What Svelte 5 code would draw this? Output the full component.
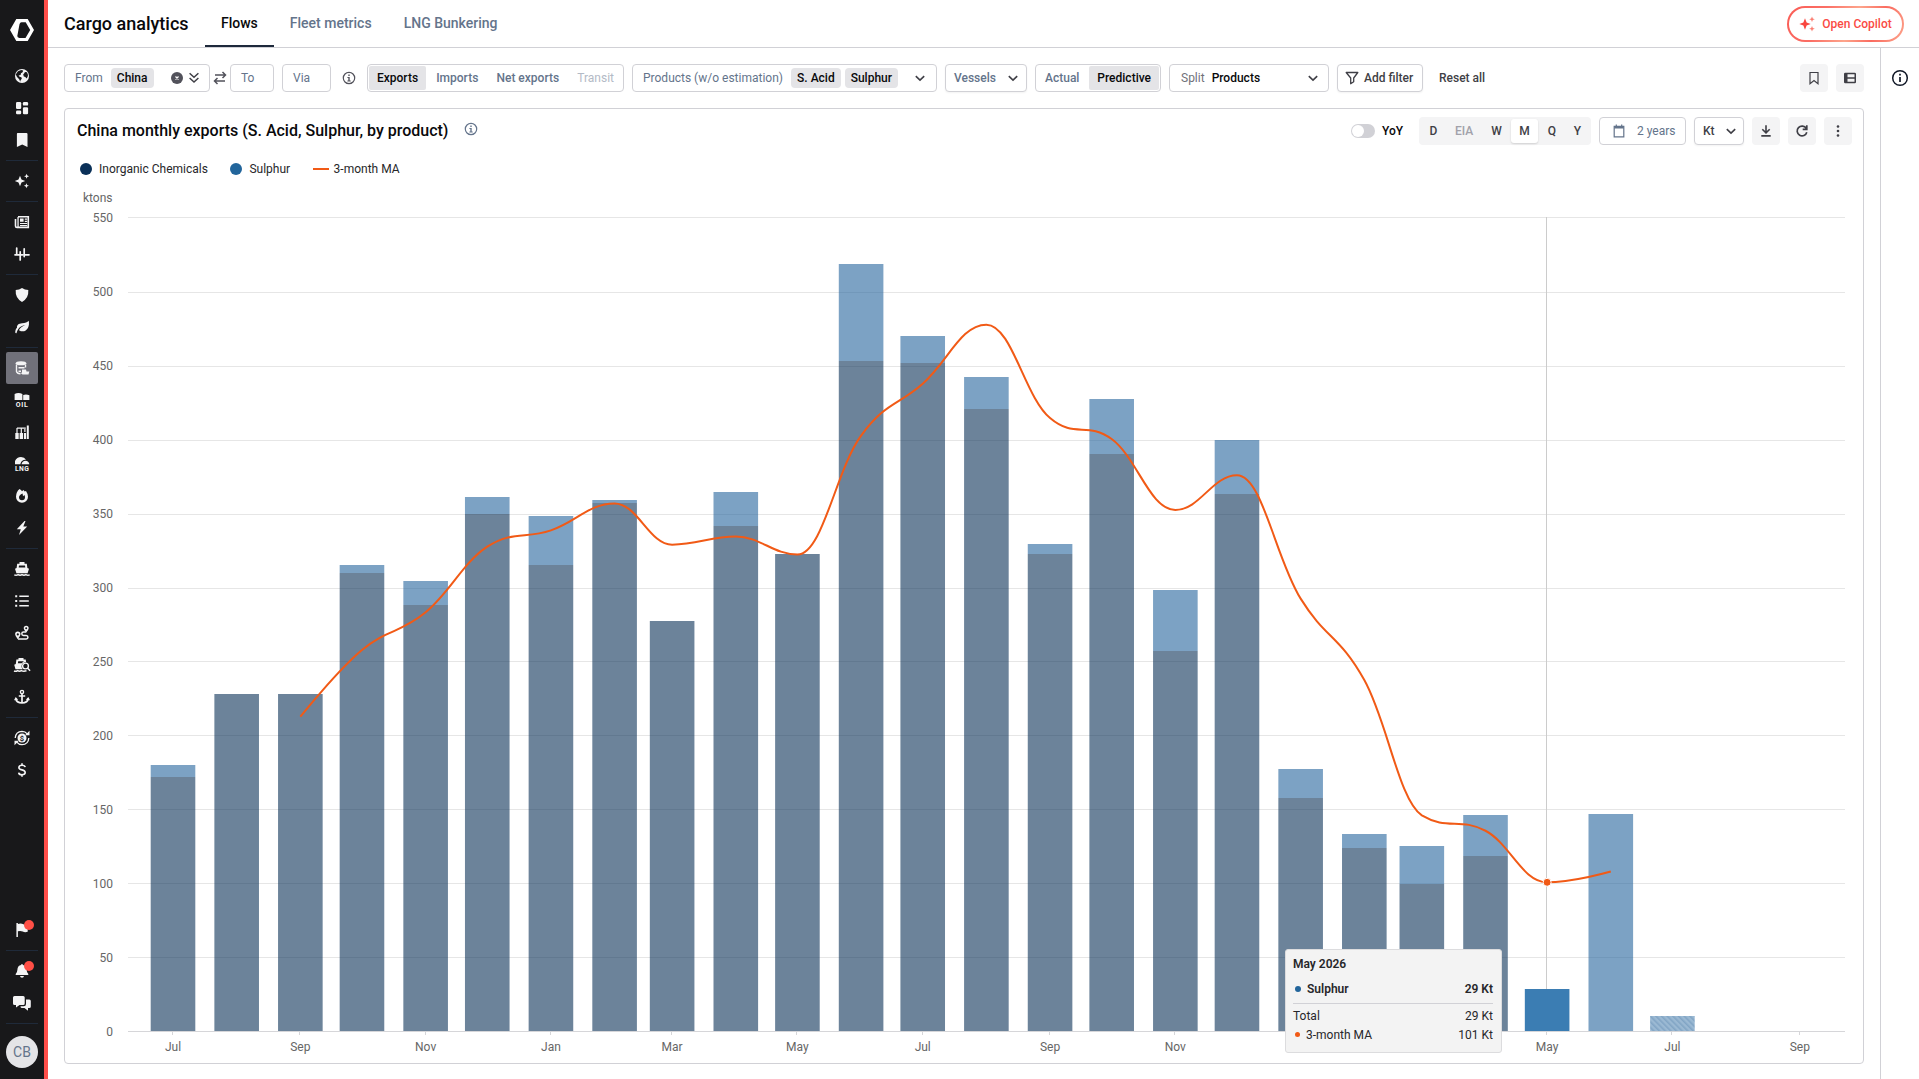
<script lang="ts">
	type Month = { year: number; month: number; inorganic: number; sulphur: number };

	// Monthly volumes in kt, starting July 2024
	const volumes: [number, number][] = [
		[172, 8], [228, 0], [228, 0], [310, 5.2], [288.2, 16.2], [349.7, 11.4],
		[315.2, 33.1], [357, 2], [277.5, 0], [341.6, 23.2], [322.6, 0], [453, 65.6],
		[451.7, 18.2], [420.6, 21.6], [322.6, 6.8], [390.2, 37.2], [257, 41.3], [363.2, 36.5],
		[157.6, 19.8], [124, 9.2], [99.7, 25.6], [118.3, 28.1], [0, 28.7], [0, 147.2], [0, 10.5]
	];

	const months: Month[] = volumes.map(([inorganic, sulphur], i) => ({
		year: 2024 + Math.floor((6 + i) / 12),
		month: (6 + i) % 12,
		inorganic,
		sulphur
	}));

	const monthNames = ['Jan', 'Feb', 'Mar', 'Apr', 'May', 'Jun', 'Jul', 'Aug', 'Sep', 'Oct', 'Nov', 'Dec'];
	const yTicks = [0, 50, 100, 150, 200, 250, 300, 350, 400, 450, 500, 550];
	const xTicks = Array.from({ length: 14 }, (_, i) => i * 2);
	const start = Date.UTC(2024, 6, 1);
	const barWidth = 44.6;
	const forecastIndex = 24;
	const hovered = 22;

	// Time scale, the month offset is counted from July 2024
	function xOf(i: number): number {
		const days = (Date.UTC(2024, 6 + i, 1) - start) / 86400000;
		return 108 + days * 2.054;
	}

	function yOf(v: number): number {
		return 841.5 - v * 1.48;
	}

	function snap(v: number): number {
		return Math.round(yOf(v));
	}

	// Grid lines sit on whole pixels, the top one on the edge of the plot
	function gridY(v: number): number {
		return v === 550 ? 27.5 : Math.floor(841.55 - v * 1.4783) + 0.5;
	}

	const average = months.slice(0, 24).map((_, i) => {
		if (i < 2) return null;
		const sum = months.slice(i - 2, i + 1).reduce((s, m) => s + m.inorganic + m.sulphur, 0);
		return { x: xOf(i), y: yOf(sum / 3) - 1 };
	}).filter((p) => p !== null);

	// Spline that never overshoots its neighbours
	function spline(pts: { x: number; y: number }[]): string {
		let d = `M${pts[0].x} ${pts[0].y}`;
		let out = pts[0];
		for (let i = 1; i < pts.length; i++) {
			const p = pts[i];
			const prev = pts[i - 1];
			const next = pts[i + 1];
			let left = { ...p };
			let right = { ...p };
			if (next) {
				const slope = (next.y - prev.y) / (next.x - prev.x);
				left = { x: p.x - 0.4 * (p.x - prev.x), y: p.y - slope * 0.4 * (p.x - prev.x) };
				right = { x: p.x + 0.4 * (next.x - p.x), y: p.y + slope * 0.4 * (next.x - p.x) };
				const clampLeft = Math.min(Math.max(left.y, Math.min(prev.y, p.y)), Math.max(prev.y, p.y));
				if (clampLeft !== left.y) {
					left.y = clampLeft;
					right.y = 2 * p.y - left.y;
				}
				const clampRight = Math.min(Math.max(right.y, Math.min(next.y, p.y)), Math.max(next.y, p.y));
				if (clampRight !== right.y) {
					right.y = clampRight;
					left.y = 2 * p.y - right.y;
				}
			}
			d += `C${out.x} ${out.y} ${left.x} ${left.y} ${p.x} ${p.y}`;
			out = right;
		}
		return d;
	}

	const navGroups = [
		['globe', 'dashboard', 'bookmark'],
		['sparkles'],
		['news', 'signal'],
		['shield', 'leaf'],
		['cargo', 'oil', 'refinery', 'lng', 'flame', 'bolt'],
		['ship', 'list', 'route', 'shipSearch', 'anchor'],
		['freight', 'dollar']
	];

	const tabs = ['Flows', 'Fleet metrics', 'LNG Bunkering'];
	const periods = ['D', 'EIA', 'W', 'M', 'Q', 'Y'];

	let tab = $state('Flows');
	let direction = $state('Exports');
	let mode = $state('Predictive');
	let period = $state('M');
	let activeNav = $state('cargo');
</script>

{#snippet icon(name: string)}
	<svg class="icon" width="16" height="16" viewBox="0 0 16 16" fill="currentColor" stroke="none">
		{#if name === 'globe'}
			<circle cx="8" cy="8" r="7" />
			<path d="M4 3.2 7.2 2l2 .6-.6 1.6L7 5.2 6.6 7 4.6 7.4l1 1.4 1.8.4 .4 1.6-1.2 1.4-.4 1.6-1-2.6L3 9 1.8 6.6 3 4.6zM11 4l2 .2 1 2.8-.4 2-1.2 1.4-1-1.4-1.6-.4-.6-2 1-1.4z" fill="#18181a" />
		{:else if name === 'dashboard'}
			<rect x="2" y="2" width="5.2" height="7" rx="1.2" />
			<rect x="8.9" y="2" width="5.2" height="3.6" rx="1.2" />
			<rect x="2" y="10.6" width="5.2" height="3.6" rx="1.2" />
			<rect x="8.9" y="7.2" width="5.2" height="7" rx="1.2" />
		{:else if name === 'bookmark'}
			<path d="M3.6 1h8.8q1.1 0 1.1 1.1V15L8.2 12.4 2.9 15V2.1Q2.9 1 3.6 1z" />
		{:else if name === 'sparkles'}
			<path d="M6 2.8 7.5 6.5 11.2 8 7.5 9.5 6 13.2 4.5 9.5.8 8l3.7-1.5zM12.6.8l.7 1.8 1.8.7-1.8.7-.7 1.8-.7-1.8-1.8-.7 1.8-.7zM12.4 10.2l.7 1.8 1.8.7-1.8.7-.7 1.8-.7-1.8-1.8-.7 1.8-.7z" />
		{:else if name === 'news'}
			<path fill="none" stroke="currentColor" stroke-width="1.6" d="M4 2.8h10.3v10.6H3q-1.5 0-1.5-1.4V5" />
			<path d="M3.4 3h1.3v10H3.4zM6 4.5h3.6v3.2H6zM10.8 4.6h2.4v1.2h-2.4zM10.8 6.8h2.4V8h-2.4zM6 9h7.2v1.1H6zM6 11h7.2v1.1H6z" />
		{:else if name === 'signal'}
			<path fill="none" stroke="currentColor" stroke-width="1.7" stroke-linecap="round" stroke-linejoin="round" d="M1 8.8h5.2v5.2M2.7 2v6.5M6.2 8.8V5.8M10.2 2.8v7.8M6.2 8.8h2.4M10.2 8.8h4.8" />
		{:else if name === 'shield'}
			<path d="M8 1q2.8 1.9 6.3 2.1.6 8.2-6.3 11.9Q1.1 11.3 1.7 3.1 5.2 2.9 8 1z" />
		{:else if name === 'leaf'}
			<path transform="scale(.667)" d="M17 9C8 11 5.4 15.2 3.8 21.3L2 21C1.5 17 3 14 4.5 13C4 9 7 6.5 12 6.2C17 6 20 5 22 2.5C24 10 20 19 12 18.5C9.5 18.3 8 17.5 7.5 16.5C10 12 14 10 17 9Z" />
		{:else if name === 'cargo'}
			<ellipse cx="7" cy="3.3" rx="5.3" ry="2" />
			<path fill="none" stroke="currentColor" stroke-width="1.4" d="M2.5 4.5v7q.5 2 4 2.2M11.5 4.5v3M4.500 7.700h6M4.500 11.200h2.500" />
			<path d="M8 9.500h4l.5 2h2.800l-.8 3H8.500l-2-1.800H8z" />
		{:else if name === 'oil'}
			<path d="M.6 2Q4.500 0 8.400 2v6H.6zM9.200 3q3-1 6.200.3V8H9.200z" />
			<text x="8.2" y="15.4" font-size="7" font-weight="700" text-anchor="middle" letter-spacing=".7">OIL</text>
		{:else if name === 'refinery'}
			<path d="M1.300 9h3.400v6H1.300zM5.600 9H9v6H5.600zM9.900 9h2.200v6H9.900zM12.800 1.500h2V15h-2zM3 3.500h8.800v1.300H3zM2.400 4h1.200v5H2.400zM6.700 4h1.200v5H6.700zM10.300 5h1.200v3h-1.200z" />
		{:else if name === 'lng'}
			<path d="M1 8.300V5q1.800-4 6-4 3.500.2 5 2.800Q8 3.300 6.500 7.500v.8zM7.500 8.300q.8-3.600 4-3.600T15.400 8.300z" />
			<text x="8.2" y="15.4" font-size="6.8" font-weight="700" text-anchor="middle" letter-spacing=".5">LNG</text>
		{:else if name === 'flame'}
			<path fill-rule="evenodd" d="M5.500 1q1.700.8 2.500 2.300L9.500 2l1.200 1.500L12 3q2 3 2 5.700A6 6 0 0 1 8 14.800 6 6 0 0 1 2 8.700Q2 4 5.500 1zM8.600 5.400Q5 6.800 5 9.200a3 3 0 0 0 6 0Q11 8 10.400 7L9 8.200z" />
		{:else if name === 'bolt'}
			<path d="M10.500 1 2.800 9.200h4L5 15l8.200-8.500H9.300L11.500 1z" />
		{:else if name === 'ship'}
			<path fill-rule="evenodd" d="M5.500 1h5v1.700h2.300L13.400 7l1.600.8-1.400 4.400H2.400L1 7.800 2.600 7l.6-4.300h2.300zM5 4.500 4.700 6.500h6.600L11 4.500z" />
			<path fill="none" stroke="currentColor" stroke-width="1.5" d="M.3 13.900q2 .9 3.800-.3 2 1.200 3.900 0 2 1.200 3.900 0 1.800 1.200 3.800.3" />
		{:else if name === 'list'}
			<path d="M1.200 2.200h2v2h-2zM1.200 7h2v2h-2zM1.200 11.800h2v2h-2zM5.300 2.400h9.500V4H5.300zM5.300 7.200h9.500v1.600H5.300zM5.300 12h9.500v1.600H5.300z" />
		{:else if name === 'route'}
			<path fill-rule="evenodd" d="M3.800 6.600a2.700 2.700 0 0 1 2.700 2.700q0 1.700-2.700 5-2.700-3.300-2.700-5a2.700 2.700 0 0 1 2.700-2.700zm0 1.700a1.100 1.100 0 1 0 0 2.200 1.100 1.100 0 0 0 0-2.200zM12.200.8a2.500 2.500 0 0 1 2.500 2.500q0 1.500-2.500 4.200-2.500-2.700-2.500-4.200A2.500 2.500 0 0 1 12.200.8zm0 1.500a1 1 0 1 0 0 2 1 1 0 0 0 0-2z" />
			<path fill="none" stroke="currentColor" stroke-width="1.5" d="M4 13.900h8.200a1.700 1.700 0 0 0 0-3.500H9.500a1.700 1.700 0 0 1 0-3.400h2.700" />
		{:else if name === 'shipSearch'}
			<path fill-rule="evenodd" d="M4.500 1h5v1.600h2.200l.4 2.500Q7.500 6 7.500 9.500q.2 1.800 1.200 2.700H1.500L.2 7.800 1.800 7l.6-4.400h2.100zM4.200 4.300l-.3 2h3.800l2.200-2z" />
			<circle cx="11.5" cy="9" r="2.9" fill="none" stroke="currentColor" stroke-width="1.4" />
			<path fill="none" stroke="currentColor" stroke-width="1.5" d="m13.400 11 2.700 2.700M0 14q2 .8 3.500-.4 2 1.200 4 0 2 1.200 5 .2" />
		{:else if name === 'anchor'}
			<path fill="none" stroke="currentColor" stroke-width="1.7" d="M8 5v8.800M4.800 7h6.400M1.800 9.700q.4 4.200 6.200 4.300 5.800-.1 6.200-4.300" />
			<circle cx="8" cy="3" r="1.6" fill="none" stroke="currentColor" stroke-width="1.4" />
			<path d="M0 11.300 1.700 8l2.500 2.800zM16 11.300 14.300 8l-2.500 2.800z" />
		{:else if name === 'freight'}
			<circle cx="8" cy="8" r="4.5" />
			<path fill="none" stroke="currentColor" stroke-width="1.3" d="M1.200 8Q1.700 1.500 8 1.300q3.300 0 5.200 2.500M14.800 8Q14.300 14.500 8 14.700q-3.300 0-5.200-2.500" />
			<path d="M15.500.8v4.400h-4.400zM.5 15.200v-4.400h4.400z" />
			<text x="8" y="10.7" font-size="7.5" font-weight="700" text-anchor="middle" fill="#18181a">$</text>
		{:else if name === 'dollar'}
			<path fill="none" stroke="currentColor" stroke-width="1.6" d="M11.200 5.200Q10.800 3.300 8 3.300T4.900 5.400Q4.900 7.300 8 7.900t3.200 2.600Q11.200 12.700 8 12.700T4.700 10.600M8 1.200v2.400M8 12.400v2.400" />
		{:else if name === 'flag'}
			<path d="M2.400 1h1.500v1q3-1 5.500.3 2 .9 4.300.2v7.300q-2.700 1-5-.2-2-1-4.800-.3V15H2.400z" />
		{:else if name === 'bell'}
			<path d="M8 1q.8 0 .9 1 3.600.8 3.700 4.700.1 2.800 1.700 4.300v1H1.700v-1q1.600-1.500 1.700-4.300Q3.500 2.800 7.100 2 7.200 1 8 1zM6 13h4q-.3 1.800-2 1.800T6 13z" />
		{:else if name === 'funnel'}
			<path fill="none" stroke="currentColor" stroke-width="1.3" stroke-linejoin="round" d="M2.200 2.500h11.600L9.700 8v3.800l-3 1.900V8z" />
		{:else if name === 'chevron'}
			<path fill="none" stroke="currentColor" stroke-width="1.6" d="m3.800 6.200 4.200 4 4.200-4" />
		{:else if name === 'doubleChevron'}
			<path fill="none" stroke="currentColor" stroke-width="1.5" d="m3.600 3.200 4.400 4 4.400-4M3.600 8l4.400 4 4.400-4" />
		{:else if name === 'clear'}
			<circle cx="8" cy="8" r="6" />
			<path stroke="#fff" stroke-width="1.2" d="m6.500 6.500 3 3M9.500 6.500l-3 3" />
		{:else if name === 'swap'}
			<path fill="none" stroke="currentColor" stroke-width="1.5" d="M3 5h10.300M10.500 2l3 3-3 3M13 11H2.700M5.500 8l-3 3 3 3" />
		{:else if name === 'info'}
			<circle cx="8" cy="8" r="5.7" fill="none" stroke="currentColor" stroke-width="1.2" />
			<path d="M7.300 4.600h1.400V6H7.300zM6.400 7h2.300v3.400h1v1H6.400v-1h.9V8h-.9z" />
		{:else if name === 'bookmarkOutline'}
			<path fill="none" stroke="currentColor" stroke-width="1.2" d="M4 2.500h8v11.200l-4-3.200-4 3.200z" />
		{:else if name === 'layout'}
			<path fill-rule="evenodd" d="M3.300 2.800h9.400q1.300 0 1.300 1.300v7.800q0 1.300-1.300 1.300H3.300Q2 13.200 2 11.900V4.100q0-1.300 1.300-1.300zM5.500 4.300v3h7v-3zM5.500 8.700v3h7v-3z" />
		{:else if name === 'calendar'}
			<path fill="none" stroke="currentColor" stroke-width="1.2" d="M3.200 3.300h9.600v10.500H3.200zM5.300 1.500v2M10.700 1.500v2" />
			<path d="M3.200 3.300h9.600v2.200H3.200z" />
		{:else if name === 'download'}
			<path fill="none" stroke="currentColor" stroke-width="1.6" d="M8 2.200v7.500M4.300 6.200 8 9.900l3.700-3.700M3.300 12.900h9.400" />
		{:else if name === 'refresh'}
			<path fill="none" stroke="currentColor" stroke-width="1.7" d="M12.200 5.300a4.900 4.900 0 1 0 .6 3.900M12.800 2.200v4.200H8.700" />
		{:else if name === 'more'}
			<circle cx="8" cy="3.5" r="1.3" /><circle cx="8" cy="8" r="1.3" /><circle cx="8" cy="12.5" r="1.3" />
		{/if}
	</svg>
{/snippet}

<div class="app">
	<nav class="sidebar">
		<svg class="logo" width="24" height="22" viewBox="0 0 24 22">
			<path fill="#fff" fill-rule="evenodd" d="M6.300 0h11.400L24 11l-6.300 11H6.300L0 11zM11.500 3.200q-1.500.2-2 2L7.300 17q0 1.800 2 1.900h6.200L20.200 11l-4.500-7.800z" />
		</svg>
		{#each navGroups as group, g}
			{#if g > 0}<hr />{/if}
			{#each group as name}
				<button class="nav-item" class:active={activeNav === name} onclick={() => (activeNav = name)} aria-label={name}>
					{@render icon(name)}
				</button>
			{/each}
		{/each}
		<div class="spacer"></div>
		<button class="nav-item" aria-label="flag">{@render icon('flag')}<i class="dot"></i></button>
		<hr />
		<button class="nav-item" aria-label="bell">{@render icon('bell')}<i class="dot"></i></button>
		<button class="nav-item" aria-label="chat">
			<svg width="18" height="15" viewBox="0 0 18 15" fill="currentColor">
				<path d="M1.500 0h8.700q1.500 0 1.500 1.500v6q0 1.500-1.500 1.500H6.500L3 11.500V9H1.500Q0 9 0 7.500v-6Q0 0 1.500 0z" />
				<path d="M13 3.500h3.300q1.500 0 1.500 1.500v5.500q0 1.500-1.500 1.500H15v2.700L11.500 12H9q-1.500 0-1.500-1.500v-.3h3.300Q13 10.200 13 8z" />
			</svg>
		</button>
		<hr />
		<div class="avatar">CB</div>
	</nav>

	<div class="main">
		<header>
			<h1>Cargo analytics</h1>
			<div class="tabs">
				{#each tabs as t}
					<button class="tab" class:active={tab === t} onclick={() => (tab = t)}>{t}</button>
				{/each}
			</div>
			<button class="copilot">
				<svg width="16" height="16" viewBox="0 0 16 16">
					<path fill="#f9463f" d="M6 2.300 7.600 6.400 11.700 8 7.600 9.600 6 13.700 4.400 9.600.3 8l4.100-1.600z" />
					<path fill="#fb7c70" d="m13 .4.800 2 2 .8-2 .8-.8 2-.8-2-2-.8 2-.8zM13 9.900l.8 2 2 .8-2 .8-.8 2-.8-2-2-.8 2-.8z" />
				</svg>
				Open Copilot
			</button>
		</header>

		<div class="body">
			<div class="content">
				<div class="filters">
					<div class="box from">
						<span class="muted">From</span>
						<span class="chip">China</span>
						<span class="clear">{@render icon('clear')}</span>
						{@render icon('doubleChevron')}
					</div>
					<span class="swap">{@render icon('swap')}</span>
					<div class="box to">To</div>
					<div class="box via">Via</div>
					<span class="hint">{@render icon('info')}</span>
					<div class="box group directions">
						{#each ['Exports', 'Imports', 'Net exports', 'Transit'] as d}
							<button class:active={direction === d} disabled={d === 'Transit'} onclick={() => (direction = d)}>{d}</button>
						{/each}
					</div>
					<div class="box products">
						<span class="muted">Products (w/o estimation)</span>
						<span class="chip">S. Acid</span>
						<span class="chip">Sulphur</span>
						{@render icon('chevron')}
					</div>
					<div class="box vessels">
						<span class="muted">Vessels</span>
						{@render icon('chevron')}
					</div>
					<div class="box group modes">
						{#each ['Actual', 'Predictive'] as m}
							<button class:active={mode === m} onclick={() => (mode = m)}>{m}</button>
						{/each}
					</div>
					<div class="box split">
						<span class="light">Split</span>
						<span class="value">Products</span>
						{@render icon('chevron')}
					</div>
					<button class="box add">{@render icon('funnel')}Add filter</button>
					<button class="reset">Reset all</button>
					<button class="square first" aria-label="Save view">{@render icon('bookmarkOutline')}</button>
					<button class="square" aria-label="Layout">{@render icon('layout')}</button>
				</div>

				<section class="card">
					<div class="card-head">
						<h2>China monthly exports (S. Acid, Sulphur, by product)</h2>
						<span class="title-info">{@render icon('info')}</span>
						<div class="tools">
							<span class="toggle"></span>
							<span class="yoy">YoY</span>
							<div class="periods">
								{#each periods as p}
									<button class={p} class:active={period === p} disabled={p === 'EIA'} onclick={() => (period = p)}>{p}</button>
								{/each}
							</div>
							<div class="box range">{@render icon('calendar')}2 years</div>
							<div class="box unit">Kt{@render icon('chevron')}</div>
							<button class="square" aria-label="Download">{@render icon('download')}</button>
							<button class="square" aria-label="Refresh">{@render icon('refresh')}</button>
							<button class="square" aria-label="More">{@render icon('more')}</button>
						</div>
					</div>

					<div class="legend">
						<span><i class="swatch inorganic"></i>Inorganic Chemicals</span>
						<span><i class="swatch sulphur"></i>Sulphur</span>
						<span><i class="swatch line"></i>3-month MA</span>
					</div>

					<div class="chart">
						<svg width="1797" height="873" viewBox="0 0 1797 873">
							<defs>
								<pattern id="hatch" width="4" height="4" patternUnits="userSpaceOnUse" patternTransform="rotate(-45)">
									<rect width="4" height="4" fill="#9bb9d3" />
									<rect width="1.6" height="4" fill="#82a5c5" />
								</pattern>
							</defs>
							<text class="axis" x="47.5" y="12" text-anchor="end">ktons</text>
							{#each yTicks as t}
								<path class="grid" class:base={t === 0} d="M63 {gridY(t)}H1780" />
								<text class="axis" x="48" y={yOf(t) + 4.9} text-anchor="end">{t}</text>
							{/each}
							<path class="crosshair" d="M{Math.floor(xOf(hovered)) - 0.5} 27V841" />
							{#each months as m, i}
								{@const x = xOf(i) - barWidth / 2}
								{@const top = snap(m.inorganic + m.sulphur)}
								{@const split = snap(m.inorganic)}
								{#if m.sulphur > 0}
									<rect
										class="bar-sulphur"
										class:hovered={i === hovered}
										class:forecast={i === forecastIndex}
										x={x}
										y={top}
										width={barWidth}
										height={Math.min(split, 841) - top}
									/>
								{/if}
								{#if m.inorganic > 0}
									<rect class="bar-inorganic" x={x} y={split} width={barWidth} height={841 - split} />
								{/if}
							{/each}
							{#each xTicks as i}
								<path class="tick" d="M{Math.round(xOf(i)) - 0.5} 842v3" />
								<text class="axis" x={xOf(i)} y="861" text-anchor="middle">{monthNames[(6 + i) % 12]}</text>
							{/each}
							<path class="average" d={spline(average)} />
							<circle cx={xOf(hovered)} cy={average[hovered - 2].y} r="4" fill="#f15a16" stroke="#fff" />
						</svg>

						<div class="tooltip">
							<strong>May 2026</strong>
							<div class="row bold"><i class="blue"></i>Sulphur<span>29 Kt</span></div>
							<div class="row">Total<span>29 Kt</span></div>
							<div class="row"><i class="orange"></i>3-month MA<span>101 Kt</span></div>
						</div>
					</div>
				</section>
			</div>
			<aside>
				<svg width="18" height="18" viewBox="0 0 18 18" fill="none" stroke="#111827">
					<circle cx="9" cy="9" r="7.3" stroke-width="1.5" />
					<path stroke-width="1.7" d="M9 8v5M9 4.700v1.700" />
				</svg>
			</aside>
		</div>
	</div>
</div>

<style>
	:global(body) {
		margin: 0;
		background: #fff;
		font-family: Roboto, 'Liberation Sans', sans-serif;
		font-size: 12px;
		color: #09090b;
	}

	button {
		font: inherit;
		color: inherit;
		background: none;
		border: none;
		padding: 0;
		cursor: pointer;
	}

	.icon {
		flex-shrink: 0;
		display: block;
		overflow: visible;
	}

	.app {
		display: flex;
		height: 1079px;
		overflow: hidden;
	}

	.sidebar {
		width: 44px;
		flex-shrink: 0;
		box-sizing: content-box;
		background: #18181a;
		border-right: 4px solid #ff4f4a;
		color: #f4f4f5;
		display: flex;
		flex-direction: column;
		align-items: center;
	}

	.logo {
		margin: 19px 0;
		flex-shrink: 0;
	}

	.sidebar hr {
		width: 32px;
		height: 1px;
		margin: 4px 0;
		border: none;
		background: #1f2a3a;
		flex-shrink: 0;
	}

	.nav-item {
		position: relative;
		width: 32px;
		height: 32px;
		flex-shrink: 0;
		display: flex;
		align-items: center;
		justify-content: center;
		border-radius: 2px;
	}

	.nav-item.active {
		background: #71717a;
	}

	.spacer {
		flex: 1;
	}

	.dot {
		position: absolute;
		top: 6px;
		right: 4px;
		width: 10px;
		height: 10px;
		border-radius: 50%;
		background: #ff4f46;
	}

	.avatar {
		width: 32px;
		height: 32px;
		margin: 8px 0 11px;
		border-radius: 50%;
		background: #e4e4e7;
		color: #64748b;
		font-size: 14px;
		line-height: 32px;
		text-align: center;
		flex-shrink: 0;
	}

	.main {
		flex: 1;
		min-width: 0;
		display: flex;
		flex-direction: column;
	}

	header {
		height: 47px;
		display: flex;
		align-items: stretch;
		padding: 0 15px 0 16px;
		border-bottom: 1px solid #d1d1d6;
	}

	h1 {
		margin: 0;
		width: 141px;
		font-size: 18px;
		font-weight: 500;
		line-height: 48px;
		white-space: nowrap;
	}

	.tabs {
		display: flex;
	}

	.tab {
		padding: 1px 16px 0;
		font-size: 14px;
		font-weight: 500;
		color: #64748b;
		border-bottom: 2px solid transparent;
	}

	.tab.active {
		color: #09090b;
		border-color: #1e293b;
	}

	.copilot {
		width: 117px;
		height: 36px;
		margin: 6px 0 0 auto;
		box-sizing: border-box;
		border: 2px solid transparent;
		border-radius: 18px;
		background:
			linear-gradient(#fff, #fff) padding-box,
			linear-gradient(115deg, #fa5b54, #fb6f66 30%, #fda58c 55%, #fa6b60 75%, #fda58c) border-box;
		color: #fa4b45;
		font-weight: 500;
		display: flex;
		align-items: center;
		justify-content: center;
		gap: 7px;
		white-space: nowrap;
	}

	.body {
		flex: 1;
		display: flex;
		min-height: 0;
	}

	.content {
		flex: 1;
		min-width: 0;
		padding: 16px 16px 15px;
		display: flex;
		flex-direction: column;
		gap: 16px;
	}

	aside {
		width: 39px;
		border-left: 1px solid #d1d1d6;
		display: flex;
		justify-content: center;
		padding-top: 21px;
		box-sizing: border-box;
	}

	.filters {
		display: flex;
		height: 28px;
		align-items: center;
		font-weight: 500;
		white-space: nowrap;
	}

	.box {
		box-sizing: border-box;
		height: 28px;
		display: flex;
		align-items: center;
		border: 1px solid #d1d1d6;
		border-radius: 4px;
		background: #fff;
		color: #3f3f46;
	}

	.muted,
	.to,
	.via {
		color: #64748b;
		font-weight: 400;
	}

	.chip {
		height: 20px;
		line-height: 20px;
		padding: 0 6px;
		border-radius: 4px;
		background: #e4e4e7;
		color: #09090b;
	}

	.from {
		width: 146px;
		padding: 0 7px 0 10px;
	}

	.from .chip {
		margin-left: 8px;
		margin-right: auto;
	}

	.clear {
		margin-right: 1px;
		color: #52525b;
	}

	.swap {
		width: 20px;
		display: flex;
		justify-content: center;
		color: #52525b;
	}

	.to {
		width: 44px;
		padding-left: 10px;
	}

	.via {
		width: 49px;
		margin-left: 8px;
		padding-left: 10px;
	}

	.hint {
		margin: 0 10px;
		color: #52525b;
	}

	.group {
		padding: 1px;
	}

	.group button {
		height: 24px;
		padding: 0 8px;
		border-radius: 2px;
		color: #64748b;
	}

	.group button.active {
		background: #e4e4e7;
		color: #09090b;
	}

	.group button:disabled {
		color: #b3bac6;
		font-weight: 400;
	}

	.directions {
		width: 257px;
		justify-content: space-between;
	}

	.products {
		width: 305px;
		margin-left: 8px;
		padding: 0 8px 0 10px;
	}

	.products .muted {
		margin-right: auto;
	}

	.products .chip {
		margin-right: 4px;
	}

	.products .chip + .chip {
		margin-right: 14px;
	}

	.vessels {
		width: 82px;
		margin-left: 8px;
		padding: 0 5px 0 8px;
		justify-content: space-between;
		box-shadow: 0 1px 2px #0000000d;
	}

	.vessels .muted {
		font-weight: 500;
	}

	.modes {
		width: 126px;
		margin-left: 8px;
		justify-content: space-between;
	}

	.split {
		width: 160px;
		margin-left: 8px;
		padding: 0 7px 0 11px;
		gap: 7px;
	}

	.light {
		color: #71717a;
		font-weight: 400;
	}

	.value {
		color: #09090b;
		margin-right: auto;
	}

	.add {
		width: 86px;
		margin-left: 8px;
		padding: 0 6px;
		gap: 4px;
		border: 1px solid #d1d1d6;
		box-shadow: 0 1px 2px #0000000d;
	}

	.reset {
		margin-left: 16px;
		color: #3f3f46;
	}

	.square {
		width: 28px;
		height: 28px;
		display: flex;
		align-items: center;
		justify-content: center;
		border-radius: 4px;
		background: #f4f4f5;
		color: #3f3f46;
		margin-left: 8px;
	}

	.square.first {
		margin-left: auto;
	}

	.card {
		flex: 1;
		border: 1px solid #d1d1d6;
		border-radius: 4px;
		box-sizing: border-box;
		min-height: 0;
	}

	.card-head {
		display: flex;
		height: 28px;
		padding: 8px 11px 0 12px;
		white-space: nowrap;
	}

	h2 {
		margin: 0;
		font-size: 16px;
		line-height: 28px;
		font-weight: 500;
	}

	.title-info {
		margin: 4px 0 0 15px;
		color: #64748b;
	}

	.tools {
		margin-left: auto;
		display: flex;
		align-items: center;
		font-weight: 500;
	}

	.toggle {
		width: 24px;
		height: 14px;
		border-radius: 7px;
		background: #d1d1d6;
		padding: 1px;
		box-sizing: border-box;
	}

	.toggle::before {
		content: '';
		display: block;
		width: 12px;
		height: 12px;
		border-radius: 50%;
		background: #fff;
	}

	.yoy {
		width: 37px;
		margin-left: 7px;
	}

	.periods {
		display: flex;
		padding: 2px;
		height: 24px;
		border-radius: 4px;
		background: #f4f4f5;
	}

	.periods button {
		width: 27px;
		border-radius: 3px;
		color: #3f3f46;
	}

	.periods .EIA {
		width: 36px;
		color: #a1a1aa;
	}

	.periods .D {
		width: 25px;
	}

	.periods .W {
		width: 29px;
	}

	.periods .Q {
		width: 28px;
	}

	.periods .Y {
		width: 23px;
	}

	.periods .active {
		background: #fff;
		box-shadow: 0 1px 2px #00000026;
	}

	.range {
		width: 87px;
		margin-left: 8px;
		padding-left: 11px;
		gap: 10px;
		color: #64748b;
		font-weight: 400;
	}

	.unit {
		width: 50px;
		margin-left: 8px;
		padding: 0 4px 0 8px;
		justify-content: space-between;
		box-shadow: 0 1px 2px #0000000d;
	}

	.legend {
		display: flex;
		gap: 22.5px;
		padding: 15px 15px 0;
		line-height: 18px;
		height: 30px;
		color: #27272a;
	}

	.legend span {
		display: flex;
		align-items: center;
		height: 18px;
		gap: 7px;
	}

	.swatch {
		width: 12px;
		height: 12px;
		border-radius: 50%;
	}

	.swatch.inorganic {
		background: #0a3058;
	}

	.swatch.sulphur {
		background: #22659b;
	}

	.swatch.line {
		width: 16px;
		height: 2px;
		margin-right: -2px;
		border-radius: 0;
		background: #f15a16;
	}

	.chart {
		position: relative;
	}

	.chart > svg {
		display: block;
	}

	.axis {
		font-size: 12px;
		fill: #666;
	}

	.grid {
		stroke: #e6e6e6;
	}

	.grid.base,
	.tick {
		stroke: #d6d6d9;
	}

	.crosshair {
		stroke: #ccc;
	}

	.bar-inorganic {
		fill: #0a3057;
		fill-opacity: 0.6;
	}

	.bar-sulphur {
		fill: #25649d;
		fill-opacity: 0.6;
	}

	.bar-sulphur.hovered {
		fill: #3b7db3;
		fill-opacity: 1;
	}

	.bar-sulphur.forecast {
		fill: url(#hatch);
		fill-opacity: 1;
	}

	.average {
		fill: none;
		stroke: #f15a16;
		stroke-width: 2;
	}

	.tooltip {
		position: absolute;
		left: 1220px;
		top: 759px;
		width: 217px;
		height: 104px;
		box-sizing: border-box;
		padding: 6px 8px 0 7px;
		background: #f3f3f3;
		border: 1px solid #dcdcde;
		border-radius: 3px;
		color: #27272a;
	}

	.tooltip strong {
		display: block;
		font-weight: 600;
		line-height: 16px;
		margin-bottom: 7px;
	}

	.row {
		display: flex;
		align-items: center;
		height: 19px;
	}

	.row span {
		margin-left: auto;
	}

	.row.bold {
		font-weight: 600;
		padding-bottom: 5px;
		border-bottom: 1px solid #d1d1d6;
		margin-bottom: 2px;
	}

	.row i {
		width: 5px;
		height: 5px;
		border-radius: 50%;
		margin: 0 6px 0 2px;
	}

	.row .blue {
		width: 6px;
		height: 6px;
		background: #22659b;
	}

	.orange {
		background: #f15a16;
	}
</style>
